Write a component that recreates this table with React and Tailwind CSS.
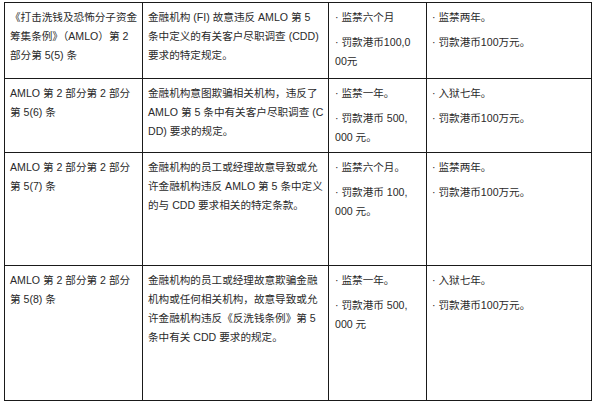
const rows = [
  {
    h: "h-[76px]",
    law: ["《打击洗钱及恐怖分子资金", "筹集条例》（AMLO）第 2", "部分第 5(5) 条"],
    desc: ["金融机构 (FI) 故意违反 AMLO 第 5", "条中定义的有关客户尽职调查 (CDD)", "要求的特定规定。"],
    summary: [["· 监禁六个月"], ["· 罚款港币100,0", "00元"]],
    indict: [["· 监禁两年。"], ["· 罚款港币100万元。"]],
  },
  {
    h: "h-[74px]",
    law: ["AMLO 第 2 部分第 2 部分", "第 5(6) 条"],
    desc: ["金融机构意图欺骗相关机构，违反了", "AMLO 第 5 条中有关客户尽职调查 (C", "DD) 要求的规定。"],
    summary: [["· 监禁一年。"], ["· 罚款港币 500,", "000 元。"]],
    indict: [["· 入狱七年。"], ["· 罚款港币100万元。"]],
  },
  {
    h: "h-[113px]",
    law: ["AMLO 第 2 部分第 2 部分", "第 5(7) 条"],
    desc: ["金融机构的员工或经理故意导致或允", "许金融机构违反 AMLO 第 5 条中定义", "的与 CDD 要求相关的特定条款。"],
    summary: [["· 监禁六个月。"], ["· 罚款港币 100,", "000 元。"]],
    indict: [["· 监禁两年。"], ["· 罚款港币100万元。"]],
  },
  {
    h: "h-[135px]",
    law: ["AMLO 第 2 部分第 2 部分", "第 5(8) 条"],
    desc: ["金融机构的员工或经理故意欺骗金融", "机构或任何相关机构，故意导致或允", "许金融机构违反《反洗钱条例》第 5", "条中有关 CDD 要求的规定。"],
    summary: [["· 监禁一年。"], ["· 罚款港币 500,", "000 元"]],
    indict: [["· 入狱七年。"], ["· 罚款港币100万元。"]],
  },
];

function Lines({ lines }) {
  return lines.map((l, i) => (
    <div key={i} className="whitespace-nowrap">{l}</div>
  ));
}

function Bullets({ items }) {
  return (
    <div className="flex flex-col gap-[6px]">
      {items.map((lines, i) => (
        <div key={i}>
          <Lines lines={lines} />
        </div>
      ))}
    </div>
  );
}

export default function App() {
  return (
    <div
      className="w-[600px] h-[412px] bg-white pt-[2px] pl-[4px] text-[#2a2a2a] text-[10.6px] leading-[19px]"
      style={{ fontFamily: '"Liberation Sans", "Noto Sans CJK SC", sans-serif' }}
    >
      <table className="table-fixed border-collapse w-[587px]">
        <colgroup>
          <col className="w-[138px]" />
          <col className="w-[186px]" />
          <col className="w-[98px]" />
          <col className="w-[165px]" />
        </colgroup>
        <tbody>
          {rows.map((r, i) => (
            <tr key={i} className={r.h}>
              <td className="border border-[#1a1a1a] align-top px-[5px] pt-[5px]">
                <Lines lines={r.law} />
              </td>
              <td className="border border-[#1a1a1a] align-top px-[5px] pt-[5px]">
                <Lines lines={r.desc} />
              </td>
              <td className="border border-[#1a1a1a] align-top px-[6px] pt-[5px]">
                <Bullets items={r.summary} />
              </td>
              <td className="border border-[#1a1a1a] align-top px-[5px] pt-[5px]">
                <Bullets items={r.indict} />
              </td>
            </tr>
          ))}
        </tbody>
      </table>
    </div>
  );
}
